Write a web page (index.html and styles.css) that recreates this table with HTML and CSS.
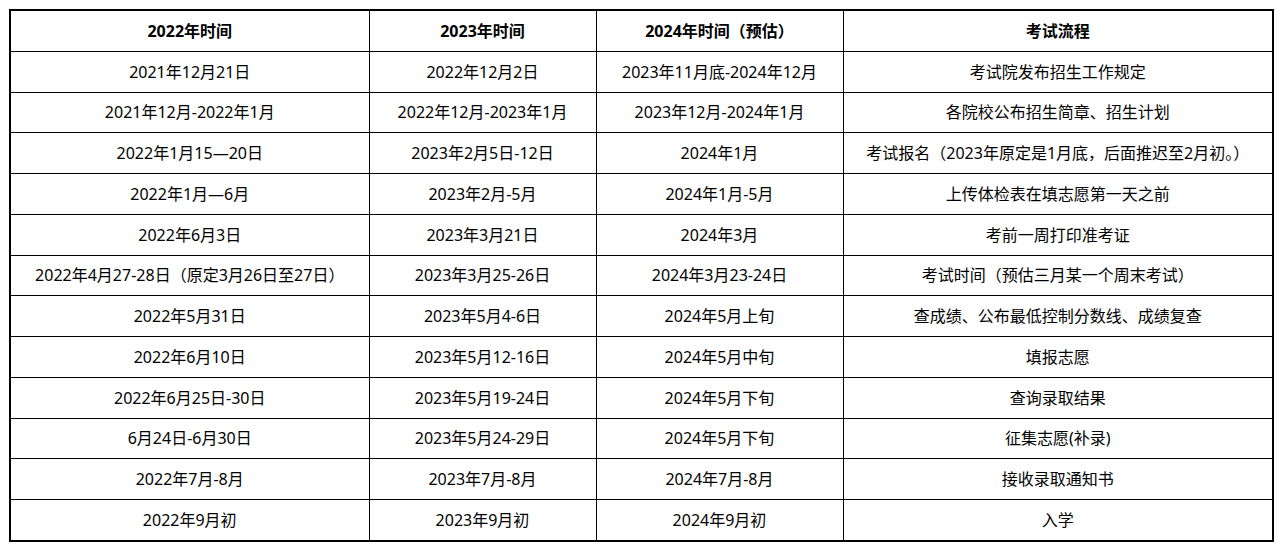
FILE: index.html
```html
<!DOCTYPE html>
<html lang="zh-CN">
<head>
<meta charset="utf-8">
<title>考试时间表</title>
<link rel="stylesheet" href="styles.css">
</head>
<body>
<div class="page">
<table class="schedule">
  <colgroup>
    <col class="c1"><col class="c2"><col class="c3"><col class="c4">
  </colgroup>
  <thead>
    <tr><th>2022年时间</th><th>2023年时间</th><th>2024年时间（预估）</th><th>考试流程</th></tr>
  </thead>
  <tbody>
    <tr><td>2021年12月21日</td><td>2022年12月2日</td><td>2023年11月底-2024年12月</td><td>考试院发布招生工作规定</td></tr>
    <tr><td>2021年12月-2022年1月</td><td>2022年12月-2023年1月</td><td>2023年12月-2024年1月</td><td>各院校公布招生简章、招生计划</td></tr>
    <tr><td>2022年1月15—20日</td><td>2023年2月5日-12日</td><td>2024年1月</td><td>考试报名（2023年原定是1月底，后面推迟至2月初。）</td></tr>
    <tr><td>2022年1月—6月</td><td>2023年2月-5月</td><td>2024年1月-5月</td><td>上传体检表在填志愿第一天之前</td></tr>
    <tr><td>2022年6月3日</td><td>2023年3月21日</td><td>2024年3月</td><td>考前一周打印准考证</td></tr>
    <tr><td>2022年4月27-28日（原定3月26日至27日）</td><td>2023年3月25-26日</td><td>2024年3月23-24日</td><td>考试时间（预估三月某一个周末考试）</td></tr>
    <tr><td>2022年5月31日</td><td>2023年5月4-6日</td><td>2024年5月上旬</td><td>查成绩、公布最低控制分数线、成绩复查</td></tr>
    <tr><td>2022年6月10日</td><td>2023年5月12-16日</td><td>2024年5月中旬</td><td>填报志愿</td></tr>
    <tr><td>2022年6月25日-30日</td><td>2023年5月19-24日</td><td>2024年5月下旬</td><td>查询录取结果</td></tr>
    <tr><td>6月24日-6月30日</td><td>2023年5月24-29日</td><td>2024年5月下旬</td><td>征集志愿(补录)</td></tr>
    <tr><td>2022年7月-8月</td><td>2023年7月-8月</td><td>2024年7月-8月</td><td>接收录取通知书</td></tr>
    <tr><td>2022年9月初</td><td>2023年9月初</td><td>2024年9月初</td><td>入学</td></tr>
  </tbody>
</table>
</div>
</body>
</html>
```
FILE: styles.css
```css
html, body {
  margin: 0;
  padding: 0;
  background: #ffffff;
}
.page {
  padding: 9px 0 0 9px;
}
.schedule {
  border-collapse: collapse;
  table-layout: fixed;
  width: 1263px;
  border: 2px solid #000;
  font-family: "Noto Sans", "Noto Sans CJK SC", sans-serif;
  font-size: 16px;
  color: #000;
}
.c1 { width: 359px; }
.c2 { width: 227px; }
.c3 { width: 247px; }
.c4 { width: 430px; }
.schedule th,
.schedule td {
  border: 1px solid #000;
  height: 39.75px;
  padding: 0;
  text-align: center;
  vertical-align: middle;
  line-height: 20px;
  white-space: nowrap;
}
.schedule th {
  font-weight: 700;
}
```
